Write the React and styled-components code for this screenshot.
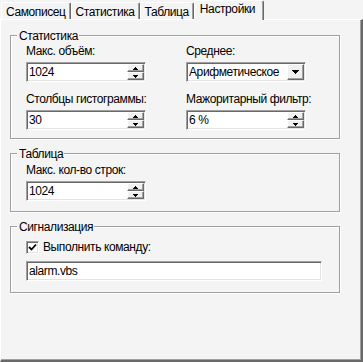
import React from "react";
import styled, { createGlobalStyle } from "styled-components";

const GlobalStyle = createGlobalStyle`
  html, body {
    margin: 0;
    padding: 0;
    background: #f4f4f4;
  }
  body {
    font-family: "Liberation Sans", Arial, sans-serif;
    font-size: 12px;
    letter-spacing: -0.4px;
    color: #000;
  }
`;

const Window = styled.div`
  width: 363px;
  height: 362px;
  display: flex;
  flex-direction: column;
  background: #f4f4f4;
  overflow: hidden;
`;

const TabStrip = styled.div`
  display: flex;
  align-items: flex-end;
  height: 19px;
  padding-left: 1px;
  position: relative;
  z-index: 1;
`;

const Tab = styled.div`
  box-sizing: border-box;
  height: ${({ $active }) => ($active ? 20 : 17)}px;
  margin-bottom: ${({ $active }) => ($active ? -1 : 0)}px;
  padding: ${({ $active }) => ($active ? "1px 8px 0 5px" : "2px 4px 0 4px")};
  line-height: 14px;
  white-space: nowrap;
  background: #f4f4f4;
  border-top: 1px solid #fff;
  border-left: 1px solid #fff;
  border-right: 1px solid #696969;
  border-top-left-radius: 2px;
  border-top-right-radius: 2px;
  box-shadow: inset -1px 0 0 #a0a0a0;
`;

const Panel = styled.div`
  flex: 1;
  box-sizing: border-box;
  border-top: 1px solid #fff;
  border-left: 1px solid #fff;
  border-right: 2px solid #696969;
  border-bottom: 2px solid #696969;
  box-shadow: inset -1px -1px 0 #a0a0a0;
  padding: 15px 0 0 9px;
  display: flex;
  flex-direction: column;
  gap: 14px;
`;

const Group = styled.div`
  position: relative;
  box-sizing: border-box;
  width: 330px;
  border: 1px solid #a0a0a0;
  box-shadow: inset 1px 1px 0 #fff, 1px 1px 0 #fff;
  padding: ${({ $top = 8 }) => $top}px 15px ${({ $bottom = 8 }) => $bottom}px;
`;

const Caption = styled.span`
  position: absolute;
  top: -7px;
  left: 6px;
  padding: 0 1px 0 2px;
  line-height: 14px;
  background: #f4f4f4;
`;

const Grid = styled.div`
  display: grid;
  grid-template-columns: 120px 120px;
  column-gap: 40px;
  row-gap: 10px;
`;

const Field = styled.div`
  display: flex;
  flex-direction: column;
  gap: 4px;
`;

const Label = styled.label`
  line-height: 14px;
  white-space: nowrap;
`;

const Sunken = styled.div`
  box-sizing: border-box;
  display: flex;
  align-items: stretch;
  width: ${({ $width = 120 }) => $width}px;
  height: 20px;
  background: #fff;
  border: 1px solid;
  border-color: #a0a0a0 #fff #fff #a0a0a0;
  box-shadow: inset 1px 1px 0 #696969, inset -1px -1px 0 #e3e3e3;
  padding: 1px;
`;

const Value = styled.div`
  flex: 1;
  min-width: 0;
  padding-left: 1px;
  line-height: 16px;
  white-space: nowrap;
  overflow: hidden;
`;

const SpinStack = styled.div`
  flex: none;
  display: flex;
  flex-direction: column;
  width: 17px;
`;

const RaisedButton = styled.div`
  box-sizing: border-box;
  flex: ${({ $width }) => ($width ? "none" : "1")};
  width: ${({ $width }) => ($width ? `${$width}px` : "auto")};
  display: flex;
  align-items: center;
  justify-content: center;
  background: #f0f0f0;
  border: 1px solid;
  border-color: #fff #696969 #696969 #fff;
  box-shadow: inset -1px -1px 0 #a0a0a0;
`;

const Arrow = ({ up, big }) => {
  const w = big ? 7 : 5;
  const h = big ? 4 : 3;
  const points = up ? `0,${h} ${w},${h} ${w / 2},0` : `0,0 ${w},0 ${w / 2},${h}`;
  return (
    <svg width={w} height={h} viewBox={`0 0 ${w} ${h}`} shapeRendering="crispEdges">
      <polygon points={points} fill="#000" />
    </svg>
  );
};

const SpinEdit = ({ value, width }) => (
  <Sunken $width={width}>
    <Value>{value}</Value>
    <SpinStack>
      <RaisedButton>
        <Arrow up />
      </RaisedButton>
      <RaisedButton>
        <Arrow />
      </RaisedButton>
    </SpinStack>
  </Sunken>
);

const ComboBox = ({ value, width }) => (
  <Sunken $width={width}>
    <Value>{value}</Value>
    <RaisedButton $width={17}>
      <Arrow big />
    </RaisedButton>
  </Sunken>
);

const CheckRow = styled.label`
  display: flex;
  align-items: center;
  gap: 4px;
  height: 14px;
  line-height: 14px;
`;

const CheckBox = styled.span`
  box-sizing: border-box;
  display: flex;
  align-items: center;
  justify-content: center;
  width: 13px;
  height: 13px;
  background: #fff;
  border: 1px solid;
  border-color: #a0a0a0 #fff #fff #a0a0a0;
  box-shadow: inset 1px 1px 0 #696969, inset -1px -1px 0 #e3e3e3;
`;

const CommandField = styled(Sunken)`
  margin-top: 7px;
`;

const tabs = ["Самописец", "Статистика", "Таблица", "Настройки"];

export default function App() {
  return (
    <>
      <GlobalStyle />
      <Window>
        <TabStrip>
          {tabs.map((t) => (
            <Tab key={t} $active={t === "Настройки"}>
              {t}
            </Tab>
          ))}
        </TabStrip>
        <Panel>
          <Group $top={8} $bottom={8}>
            <Caption>Статистика</Caption>
            <Grid>
              <Field>
                <Label>Макс. объём:</Label>
                <SpinEdit value="1024" />
              </Field>
              <Field>
                <Label>Среднее:</Label>
                <ComboBox value="Арифметическое" />
              </Field>
              <Field>
                <Label>Столбцы гистограммы:</Label>
                <SpinEdit value="30" />
              </Field>
              <Field>
                <Label>Мажоритарный фильтр:</Label>
                <SpinEdit value="6 %" />
              </Field>
            </Grid>
          </Group>
          <Group $top={9} $bottom={10}>
            <Caption>Таблица</Caption>
            <Field>
              <Label>Макс. кол-во строк:</Label>
              <SpinEdit value="1024" />
            </Field>
          </Group>
          <Group $top={13} $bottom={11}>
            <Caption>Сигнализация</Caption>
            <CheckRow>
              <CheckBox>
                <svg width="9" height="9" viewBox="0 0 9 9">
                  <polyline points="1,4 3.5,6.5 8,1.5" fill="none" stroke="#000" strokeWidth="1.8" />
                </svg>
              </CheckBox>
              Выполнить команду:
            </CheckRow>
            <CommandField $width={296}>
              <Value>alarm.vbs</Value>
            </CommandField>
          </Group>
        </Panel>
      </Window>
    </>
  );
}
